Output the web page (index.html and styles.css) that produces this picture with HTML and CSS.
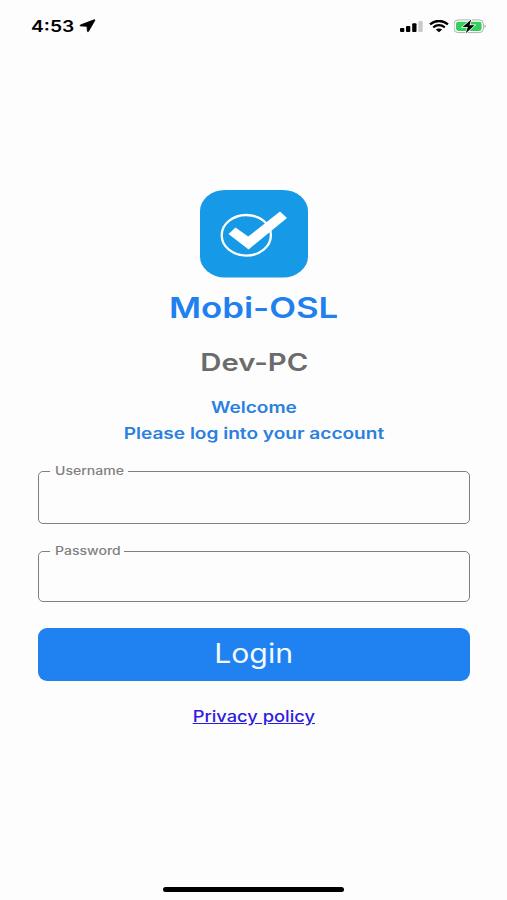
FILE: index.html
```html
<!DOCTYPE html>
<html lang="en">
<head>
    <meta charset="UTF-8">
    <meta name="viewport" content="width=device-width, initial-scale=1.0">
    <title>Mobi-OSL</title>
    <link rel="stylesheet" href="styles.css">
</head>
<body>
    <div class="status-bar">
        <div class="status-left">
            <span class="time wide">4:53</span>
            <svg class="location" width="17" height="14" viewBox="0 0 17 14">
                <path d="M15.2 0.8 L1.4 6 Q0.6 6.6 1.5 6.9 L8 7.2 L8.4 12.1 Q8.7 13.2 9.5 12.3 L15.8 1.4 Q16 0.5 15.2 0.8 Z" fill="#000" stroke="#000" stroke-width="0.9" stroke-linejoin="round"/>
            </svg>
        </div>
        <div class="status-right">
            <svg width="24" height="13" viewBox="0 0 24 13">
                <rect x="0" y="8" width="4.3" height="4" rx="1" fill="#000"/>
                <rect x="6" y="6" width="4.3" height="6" rx="1" fill="#000"/>
                <rect x="12.2" y="3.3" width="4.3" height="8.7" rx="1" fill="#000"/>
                <rect x="18.4" y="1" width="4.3" height="11" rx="1" fill="#c9c9cb"/>
            </svg>
            <svg width="20" height="13" viewBox="0 0 20 13">
                <path d="M1 4.4 Q10 -2.6 19 4.4" fill="none" stroke="#000" stroke-width="2.4"/>
                <path d="M4.2 7.3 Q10 3 15.8 7.3" fill="none" stroke="#000" stroke-width="2.2"/>
                <path d="M6.8 9.4 Q10 7.4 13.2 9.4 L10 12.2 Z" fill="#000"/>
            </svg>
            <svg width="34" height="15" viewBox="0 0 34 15">
                <rect x="0.1" y="0.9" width="29.3" height="12.7" rx="4" fill="#fff" stroke="#b0b0b0"/>
                <rect x="2" y="2.7" width="25.6" height="9.2" rx="2.4" fill="#35cf5c"/>
                <path d="M30.6 5.2 Q32.8 7.2 30.6 9.2 Z" fill="#999"/>
                <path d="M17.2 0.4 L8.6 8.1 H13.8 L11.8 14.2 L20.6 6.2 H15.5 Z" fill="#000" stroke="#fff" stroke-width="1.4" paint-order="stroke"/>
            </svg>
        </div>
    </div>

    <div class="container">
        <svg class="logo" width="108" height="88" viewBox="0 0 108 88">
            <rect width="108" height="87.5" rx="25" ry="21" fill="#1699e6"/>
            <ellipse cx="46.3" cy="45.3" rx="24.6" ry="20.3" fill="none" stroke="#fff" stroke-width="2.3"/>
            <path d="M28.5 44 L35.5 37.5 L48.2 46.6 L80 21.4 L87 28 L48.6 59.4 Z" fill="#fff"/>
        </svg>
        <h1><span class="wide">Mobi-OSL</span></h1>
        <h2><span class="wide">Dev-PC</span></h2>
        <p class="welcome"><span class="wide">Welcome</span></p>
        <p class="welcome"><span class="wide">Please log into your account</span></p>

        <form id="loginForm">
            <fieldset class="field username">
                <legend><label class="wide" for="username">Username</label></legend>
                <input type="text" id="username" name="username">
            </fieldset>
            <fieldset class="field password">
                <legend><label class="wide" for="password">Password</label></legend>
                <input type="password" id="password" name="password">
            </fieldset>
            <button type="submit"><span class="wide">Login</span></button>
        </form>

        <a class="policy wide" href="#">Privacy policy</a>
    </div>

    <div class="home-bar"></div>
</body>
</html>
```
FILE: styles.css
```css
* {
    box-sizing: border-box;
}

body {
    margin: 0;
    height: 900px;
    display: flex;
    flex-direction: column;
    font-family: Inter, 'Liberation Sans', sans-serif;
    background: #fdfdfd;
    overflow: hidden;
}

/* extended letterforms */
.wide {
    display: inline-block;
    white-space: nowrap;
    transform: scaleX(1.2);
}

.status-bar {
    display: flex;
    justify-content: space-between;
    align-items: center;
    height: 52px;
    padding: 0 19px 0 31px;
}

.status-left,
.status-right {
    display: flex;
    align-items: center;
}

.status-right {
    gap: 5px;
}

.time {
    width: 48px;
    font-size: 16px;
    font-weight: 600;
    transform-origin: left;
}

.container {
    flex: 1;
    display: flex;
    flex-direction: column;
    align-items: center;
    padding: 138px 37px 0 38px;
}

.logo {
    display: block;
}

h1,
h2,
p {
    margin: 0;
}

h1 {
    margin-top: 12px;
    font-size: 29px;
    line-height: 36px;
    font-weight: 600;
    color: #2080ee;
}

h2 {
    margin-top: 22px;
    font-size: 24px;
    line-height: 30px;
    font-weight: 600;
    color: #6b6b6b;
}

h2 .wide {
    transform: scaleX(1.22);
}

.welcome {
    margin-top: 17px;
    font-size: 15.5px;
    line-height: 26px;
    font-weight: 600;
    color: #2a80e0;
}

.welcome .wide {
    transform: scaleX(1.23);
}

.welcome + .welcome {
    margin-top: 0;
}

form {
    width: 100%;
}

.field {
    min-width: 0;
    margin: 0;
    padding: 0 10px 0 11px;
    border: 1px solid #808080;
    border-radius: 5px;
}

.username {
    height: 60px;
    margin-top: 17px;
}

.password {
    height: 58px;
    margin-top: 20px;
}

.field legend {
    width: 78px;
    height: 14px;
    padding: 0 5px;
    font-size: 11.5px;
    line-height: 14px;
    font-weight: 500;
    color: #808080;
}

.password legend {
    width: 74px;
}

.field label {
    transform: scaleX(1.22);
    transform-origin: left;
}

.field input {
    width: 100%;
    height: 36px;
    border: none;
    outline: none;
    background: transparent;
    font-size: 16px;
}

button {
    display: block;
    width: 100%;
    height: 53px;
    margin-top: 26px;
    padding: 0 0 3px;
    border: none;
    border-radius: 9px;
    background: #2081f0;
    color: #f2faff;
    font-family: inherit;
    font-size: 26.5px;
    cursor: pointer;
}

button .wide {
    transform: scaleX(1.14);
}

.policy {
    margin-top: 25px;
    font-size: 15.5px;
    line-height: 22px;
    font-weight: 500;
    color: #2d1ce0;
    transform: scaleX(1.18);
}

.home-bar {
    width: 181px;
    height: 5px;
    margin: 0 auto 8px;
    border-radius: 3px;
    background: #000;
}
```
